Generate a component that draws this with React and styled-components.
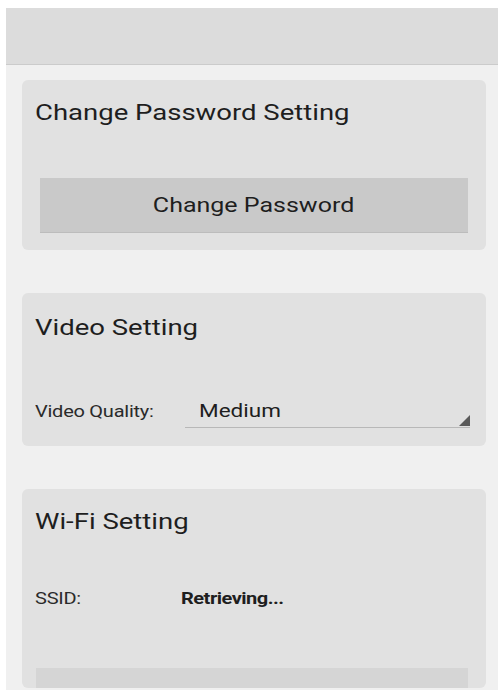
import React from 'react';
import styled, { createGlobalStyle } from 'styled-components';

const GlobalStyle = createGlobalStyle`
  html, body {
    margin: 0;
    padding: 0;
    background: #ffffff;
    font-family: Roboto, "Noto Sans", "Liberation Sans", sans-serif;
  }
`;

const Screen = styled.div`
  margin: 8px 0 0 6px;
  width: 492px;
  height: 682px;
  display: flex;
  flex-direction: column;
  overflow: hidden;
  background: #f0f0f0;
`;

const TopBar = styled.div`
  height: 56px;
  flex-shrink: 0;
  background: #dcdcdc;
  border-bottom: 1px solid #cbcbcb;
`;

const Content = styled.div`
  flex: 1;
  display: flex;
  flex-direction: column;
  gap: 43px;
  padding: 15px 12px 0 16px;
`;

const Card = styled.div`
  background: #e1e1e1;
  border-radius: 6px;
  padding: ${(p) => p.$top}px 18px ${(p) => p.$bottom}px 13px;
  display: flex;
  flex-direction: column;
  flex-shrink: 0;
`;

/* the screenshot is stretched sideways, so text is widened to match */
const Wide = styled.span`
  display: inline-block;
  transform: scaleX(1.25);
  transform-origin: ${(p) => (p.$center ? 'center' : 'left')} center;
  white-space: nowrap;
`;

const CardTitle = styled.div`
  font-size: 22px;
  line-height: 24px;
  color: #1e1e1e;
  margin-bottom: ${(p) => p.$gap}px;
`;

const Button = styled.button`
  height: 55px;
  margin-left: 5px;
  padding: 0;
  border: none;
  border-bottom: 1px solid #bcbcbc;
  background: #c9c9c9;
  font-family: inherit;
  font-size: 20px;
  color: #1e1e1e;
`;

const Row = styled.div`
  display: flex;
  align-items: center;
  height: 32px;
`;

const Label = styled.span`
  width: ${(p) => p.$w}px;
  flex-shrink: 0;
  font-size: 16px;
  color: #2a2a2a;
  letter-spacing: -0.2px;
`;

const Select = styled.div`
  flex: 1;
  height: 32px;
  position: relative;
  display: flex;
  align-items: center;
  padding-left: 14px;
  border-bottom: 1px solid #b8b8b8;
  font-size: 18px;
  color: #1e1e1e;
  margin-right: -2px;
`;

const Corner = styled.span`
  position: absolute;
  right: 0;
  bottom: 1px;
  width: 0;
  height: 0;
  border-left: 11px solid transparent;
  border-bottom: 11px solid #5a5a5a;
`;

const Value = styled.span`
  font-size: 16px;
  font-weight: 700;
  color: #1e1e1e;
  letter-spacing: -0.4px;
`;

const Spacer = styled.div`
  height: ${(p) => p.$h}px;
`;

const BottomBar = styled.div`
  height: 20px;
  margin-left: 1px;
  background: #d5d5d5;
`;

export default function App() {
  return (
    <>
      <GlobalStyle />
      <Screen>
        <TopBar />
        <Content>
          <Card $top={21} $bottom={17}>
            <CardTitle $gap={53}><Wide>Change Password Setting</Wide></CardTitle>
            <Button><Wide $center>Change Password</Wide></Button>
          </Card>
          <Card $top={23} $bottom={19}>
            <CardTitle $gap={55}><Wide>Video Setting</Wide></CardTitle>
            <Row>
              <Label $w={150}><Wide>Video Quality:</Wide></Label>
              <Select>
                <Wide>Medium</Wide>
                <Corner />
              </Select>
            </Row>
          </Card>
          <Card $top={21} $bottom={0}>
            <CardTitle $gap={48}><Wide>Wi-Fi Setting</Wide></CardTitle>
            <Row>
              <Label $w={146}><Wide>SSID:</Wide></Label>
              <Value><Wide>Retrieving...</Wide></Value>
            </Row>
            <Spacer $h={54} />
            <BottomBar />
          </Card>
        </Content>
      </Screen>
    </>
  );
}
